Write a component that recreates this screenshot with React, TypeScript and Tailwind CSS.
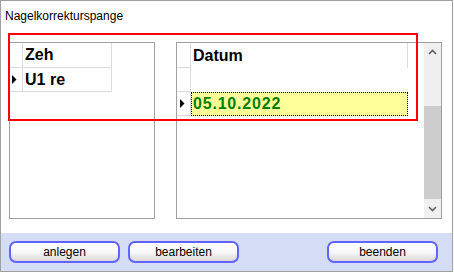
import React from 'react'

function Arrow() {
  return (
    <svg width="5" height="9" viewBox="0 0 5 9" className="block">
      <polygon points="0,0 4.5,4.5 0,9" fill="#000" />
    </svg>
  )
}

function Chevron({ down }: { down?: boolean }) {
  return (
    <svg width="9" height="6" viewBox="0 0 9 6" className="block">
      <polyline
        points={down ? '1,1 4.5,4.5 8,1' : '1,5 4.5,1.5 8,5'}
        fill="none"
        stroke="#606060"
        strokeWidth="1.6"
      />
    </svg>
  )
}

function Btn({ label }: { label: string }) {
  return (
    <button className="w-[111px] h-[22px] rounded-[7px] border-2 border-[#6262ff] bg-gradient-to-b from-white via-[#f8f8f8] to-[#d9d9d9] text-[12px] leading-none text-black">
      {label}
    </button>
  )
}

export default function App() {
  const cell = 'border-[#dcdcdc]'
  return (
    <div className="relative w-[454px] h-[273px] bg-white" style={{ fontFamily: '"Liberation Sans", Arial, sans-serif' }}>
      <div className="w-[453px] h-[272px] border border-[#a0a0a0] flex flex-col">
        <div className="h-[41px] pl-[4px] pt-[6px] text-[12px] text-black">Nagelkorrekturspange</div>

        <div className="h-[177px] flex pl-[8px] gap-[21px]">
          {/* left grid */}
          <div className="w-[146px] h-[177px] border border-[#a0a0a0] bg-white">
            <div className="flex">
              <div className="flex flex-col">
                <div className={`w-[13px] h-[25px] border-r border-b ${cell}`} />
                <div className={`w-[13px] h-[24px] border-r border-b ${cell} flex items-center pl-[2px]`}>
                  <Arrow />
                </div>
              </div>
              <div className="flex flex-col">
                <div className={`w-[89px] h-[25px] border-r border-b ${cell} pl-[2px] flex items-center text-[16px] font-bold`}>Zeh</div>
                <div className={`w-[89px] h-[24px] border-r border-b ${cell} pl-[2px] flex items-center text-[16px] font-bold`}>U1 re</div>
              </div>
            </div>
          </div>

          {/* right grid */}
          <div className="w-[266px] h-[177px] border border-[#a0a0a0] bg-white flex">
            <div className="flex-1 flex">
              <div className="flex flex-col">
                <div className={`w-[14px] h-[25px] border-r border-b ${cell}`} />
                <div className={`w-[14px] h-[24px] border-r border-b ${cell}`} />
                <div className={`w-[14px] h-[24px] border-r border-b ${cell} flex items-center pl-[3px]`}>
                  <Arrow />
                </div>
              </div>
              <div className="flex flex-col">
                <div className={`w-[217px] h-[25px] border-r ${cell} pl-[2px] flex items-center text-[16px] font-bold`}>Datum</div>
                <div className="w-[217px] h-[24px]" />
                <div className="w-[217px] h-[24px] bg-[#ffff99] border border-dotted border-black pl-[1px] flex items-center text-[16px] font-bold text-[#008000] tracking-[0.8px]">
                  05.10.2022
                </div>
              </div>
            </div>
            <div className="w-[17px] h-full bg-[#f0f0f0] flex flex-col">
              <div className="h-[17px] flex items-center justify-center"><Chevron /></div>
              <div className="h-[46px]" />
              <div className="h-[93px] bg-[#cdcdcd]" />
              <div className="flex-1 flex items-center justify-center"><Chevron down /></div>
            </div>
          </div>
        </div>

        <div className="h-[14px]" />

        <div className="h-[38px] bg-[#d5ddf5] flex pt-[8px] pl-[8px]">
          <Btn label="anlegen" />
          <div className="w-[8px]" />
          <Btn label="bearbeiten" />
          <div className="w-[88px]" />
          <Btn label="beenden" />
        </div>
      </div>

      <div className="absolute left-[8px] top-[33px] w-[410px] h-[88px] border-2 border-[#ff0000]" />
    </div>
  )
}
